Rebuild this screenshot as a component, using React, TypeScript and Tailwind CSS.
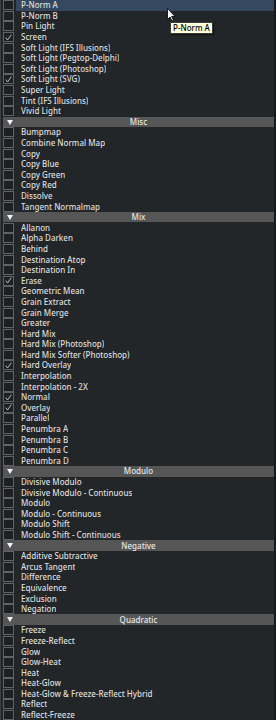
const sections: { title?: string; items: [string, boolean?][] }[] = [
  {
    items: [
      ["P-Norm A"],
      ["P-Norm B"],
      ["Pin Light"],
      ["Screen", true],
      ["Soft Light (IFS Illusions)"],
      ["Soft Light (Pegtop-Delphi)"],
      ["Soft Light (Photoshop)"],
      ["Soft Light (SVG)", true],
      ["Super Light"],
      ["Tint (IFS Illusions)"],
      ["Vivid Light"],
    ],
  },
  {
    title: "Misc",
    items: [
      ["Bumpmap"],
      ["Combine Normal Map"],
      ["Copy"],
      ["Copy Blue"],
      ["Copy Green"],
      ["Copy Red"],
      ["Dissolve"],
      ["Tangent Normalmap"],
    ],
  },
  {
    title: "Mix",
    items: [
      ["Allanon"],
      ["Alpha Darken"],
      ["Behind"],
      ["Destination Atop"],
      ["Destination In"],
      ["Erase", true],
      ["Geometric Mean"],
      ["Grain Extract"],
      ["Grain Merge"],
      ["Greater"],
      ["Hard Mix"],
      ["Hard Mix (Photoshop)"],
      ["Hard Mix Softer (Photoshop)"],
      ["Hard Overlay", true],
      ["Interpolation"],
      ["Interpolation - 2X"],
      ["Normal", true],
      ["Overlay", true],
      ["Parallel"],
      ["Penumbra A"],
      ["Penumbra B"],
      ["Penumbra C"],
      ["Penumbra D"],
    ],
  },
  {
    title: "Modulo",
    items: [
      ["Divisive Modulo"],
      ["Divisive Modulo - Continuous"],
      ["Modulo"],
      ["Modulo - Continuous"],
      ["Modulo Shift"],
      ["Modulo Shift - Continuous"],
    ],
  },
  {
    title: "Negative",
    items: [
      ["Additive Subtractive"],
      ["Arcus Tangent"],
      ["Difference"],
      ["Equivalence"],
      ["Exclusion"],
      ["Negation"],
    ],
  },
  {
    title: "Quadratic",
    items: [
      ["Freeze"],
      ["Freeze-Reflect"],
      ["Glow"],
      ["Glow-Heat"],
      ["Heat"],
      ["Heat-Glow"],
      ["Heat-Glow & Freeze-Reflect Hybrid"],
      ["Reflect"],
      ["Reflect-Freeze"],
    ],
  },
];

function Row({ label, checked, selected }: { label: string; checked?: boolean; selected?: boolean }) {
  return (
    <div className="flex h-[10.6px] items-center">
      <div className="ml-[2px] flex h-[10px] w-[11px] shrink-0 items-center justify-center border border-[#5f6266] bg-[#1d1f22]">
        {checked && (
          <svg width="7" height="7" viewBox="0 0 7 7">
            <path d="M0.8 3.6L2.6 6L6.3 0.6" fill="none" stroke="#cfcfcf" strokeWidth="0.9" />
          </svg>
        )}
      </div>
      <div
        className={`ml-[2px] flex h-full flex-1 items-center pl-[5px] ${selected ? "bg-[#34495f]" : ""}`}
      >
        <span className="truncate">{label}</span>
      </div>
    </div>
  );
}

function Header({ title }: { title: string }) {
  return (
    <div className="relative ml-[2px] flex h-[10.6px] items-center justify-center bg-[#565656] text-[#e6e6e6]">
      <svg className="absolute left-[4px] top-[3px]" width="6" height="5" viewBox="0 0 6 5">
        <path d="M0 0H6L3 5Z" fill="#f2f2f2" />
      </svg>
      <span>{title}</span>
    </div>
  );
}

export default function App() {
  return (
    <div
      className="relative h-[720px] w-[276px] overflow-hidden border-l border-[#3a3d41] border-r-2 border-r-[#16181a] bg-[#232629] text-[8px] font-medium text-[#dedede]"
      style={{ fontFamily: '"Noto Sans", "Liberation Sans", sans-serif' }}
    >
      <div className="flex flex-col">
        {sections.map((s, si) => (
          <div key={si} className="flex flex-col">
            {s.title && <Header title={s.title} />}
            {s.items.map(([label, checked], i) => (
              <Row key={label} label={label} checked={checked} selected={si === 0 && i === 0} />
            ))}
          </div>
        ))}
      </div>

      <div className="absolute left-[169px] top-[22px] border border-[#3c3c3c] bg-[#ffffdc] px-[2px] text-[8px] leading-[10px] text-black shadow-[1px_1px_1px_rgba(0,0,0,0.5)]">
        P-Norm A
      </div>

      <svg className="absolute left-[166px] top-[8px]" width="9" height="14" viewBox="0 0 9 14">
        <path d="M0.5 0.5V11.5L3 9L5 13L6.5 12.3L4.6 8.5H8Z" fill="#fff" stroke="#000" strokeWidth="0.8" />
      </svg>
    </div>
  );
}
